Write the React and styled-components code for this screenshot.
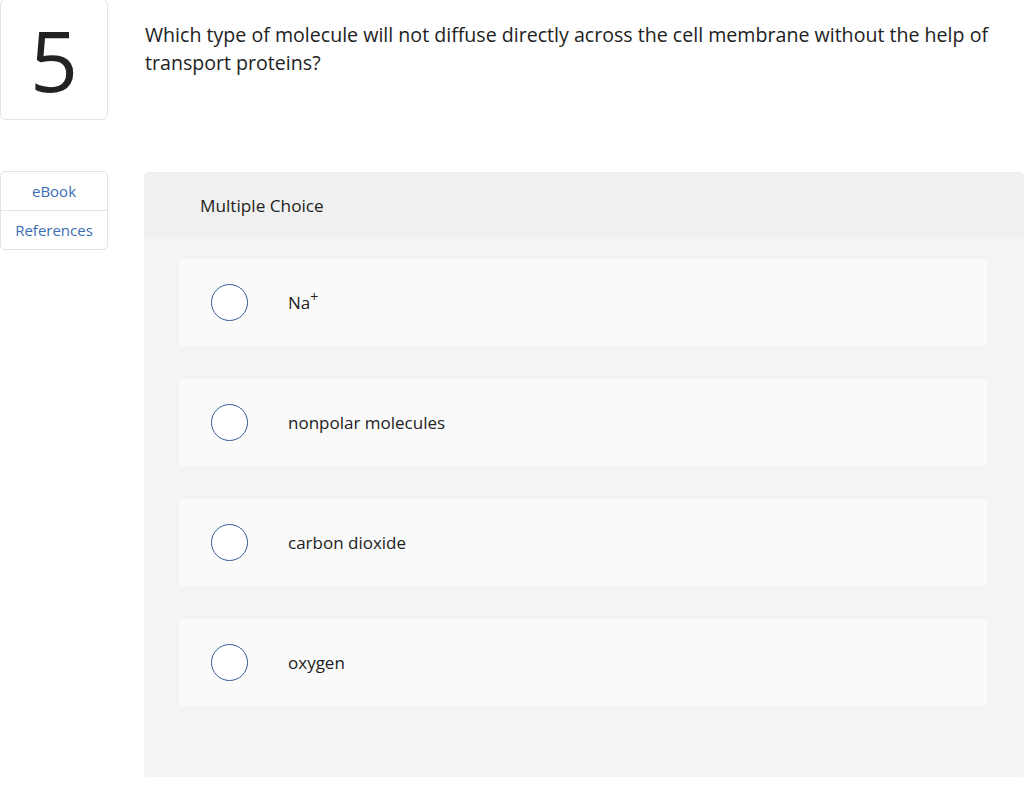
import styled, { createGlobalStyle } from 'styled-components';

const GlobalStyle = createGlobalStyle`
  html, body {
    margin: 0;
    padding: 0;
    background: #ffffff;
    font-family: "Open Sans", "Liberation Sans", sans-serif;
    color: #1a1a1a;
  }
`;

const Page = styled.div`
  display: grid;
  grid-template-columns: 108px 1fr;
  column-gap: 36px;
  row-gap: 52px;
  width: 1024px;
`;

const NumberBox = styled.div`
  box-sizing: border-box;
  height: 121px;
  margin-top: -1px;
  border: 1px solid #e3e3e3;
  border-radius: 6px;
  display: flex;
  align-items: center;
  justify-content: center;
  font-size: 84px;
  line-height: 1;
  font-weight: 400;
  color: #222;
`;

const Question = styled.p`
  margin: 21px 10px 0 1px;
  font-size: 19.6px;
  line-height: 28px;
  color: #222;
`;

const SideNav = styled.div`
  border: 1px solid #e3e3e3;
  border-radius: 5px;
  align-self: start;
  margin-top: -1px;
  display: flex;
  flex-direction: column;
`;

const SideLink = styled.a`
  height: 38px;
  display: flex;
  align-items: center;
  justify-content: center;
  font-size: 15px;
  color: #3b6db5;
  border-top: ${({ $first }) => ($first ? 'none' : '1px solid #e3e3e3')};
  cursor: pointer;
`;

const Panel = styled.section`
  background: #f4f4f4;
  border-radius: 5px;
  height: 605px;
  overflow: hidden;
`;

const PanelHeader = styled.div`
  background: #f0f0f0;
  height: 66px;
  display: flex;
  align-items: center;
  padding-left: 56px;
  font-size: 17.2px;
  color: #222;
`;

const Options = styled.div`
  display: flex;
  flex-direction: column;
  gap: 33px;
  padding: 21px 37px 0 35px;
`;

const Option = styled.label`
  height: 87px;
  background: #fafafa;
  border-radius: 4px;
  display: flex;
  align-items: center;
  padding-left: 32px;
  cursor: pointer;
`;

const Radio = styled.span`
  box-sizing: border-box;
  width: 37px;
  height: 37px;
  border-radius: 50%;
  border: 1.5px solid #2f5a96;
  background: #fff;
  flex-shrink: 0;
`;

const OptionText = styled.span`
  margin-left: 40px;
  font-size: 17px;
  color: #222;
  sup {
    font-size: 14px;
    line-height: 0;
    vertical-align: 7px;
  }
`;

const choices = [
  <>Na<sup>+</sup></>,
  'nonpolar molecules',
  'carbon dioxide',
  'oxygen',
];

export default function App() {
  return (
    <>
      <GlobalStyle />
      <Page>
        <NumberBox>5</NumberBox>
        <Question>
          Which type of molecule will not diffuse directly across the cell membrane without the help of
          transport proteins?
        </Question>
        <SideNav>
          <SideLink $first>eBook</SideLink>
          <SideLink>References</SideLink>
        </SideNav>
        <Panel>
          <PanelHeader>Multiple Choice</PanelHeader>
          <Options>
            {choices.map((c, i) => (
              <Option key={i}>
                <Radio />
                <OptionText>{c}</OptionText>
              </Option>
            ))}
          </Options>
        </Panel>
      </Page>
    </>
  );
}
